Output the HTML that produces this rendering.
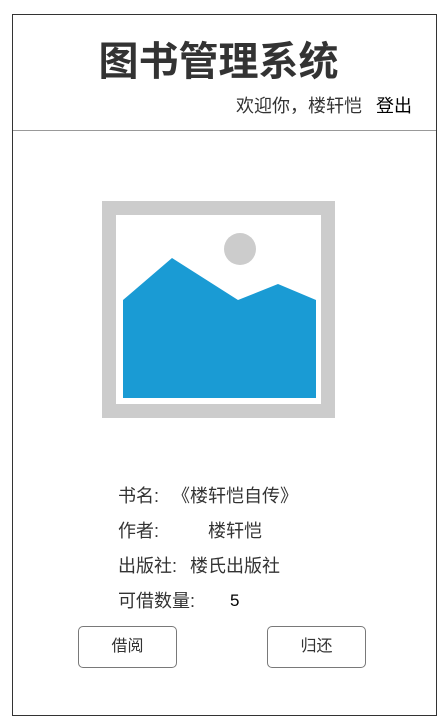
<!DOCTYPE html>
<html><head><meta charset="utf-8"><style>
body{margin:0;width:447px;height:725px;background:#fff;font-family:"Liberation Sans","Noto Sans CJK SC",sans-serif;position:relative;overflow:hidden}
.a{position:absolute}
.t{font-size:18px;color:#333;white-space:nowrap;line-height:22px}
.btn{position:absolute;width:97px;height:40px;border:1px solid #797979;border-radius:5px;text-align:center;line-height:40px;font-size:16px;color:#333;background:#fff}
</style></head><body>
<div class="a" style="left:12px;top:14px;width:423px;height:700px;border:1px solid #333"></div>
<div class="a" style="left:13px;top:130px;width:423px;height:1px;background:#999"></div>
<div class="a" style="left:0;width:437px;top:36px;text-align:center;font-size:40px;font-weight:bold;color:#333;line-height:52px">图书管理系统</div>
<div class="a t" style="left:236px;top:95px">欢迎你，楼轩恺</div>
<div class="a t" style="left:376px;top:95px;color:#000">登出</div>
<svg class="a" style="left:0;top:0" width="447" height="725">
<rect x="109" y="208" width="219" height="203" fill="none" stroke="#ccc" stroke-width="14"/>
<polygon points="123,300 172,258 238,300 278,284 316,300 316,398 123,398" fill="#1a9bd4"/>
<circle cx="240" cy="249" r="16" fill="#ccc"/>
</svg>
<div class="a t" style="left:118px;top:485px">书名:</div>
<div class="a t" style="left:172px;top:485px">《楼轩恺自传》</div>
<div class="a t" style="left:118px;top:520px">作者:</div>
<div class="a t" style="left:208px;top:520px">楼轩恺</div>
<div class="a t" style="left:118px;top:555px">出版社:</div>
<div class="a t" style="left:190px;top:555px">楼氏出版社</div>
<div class="a t" style="left:118px;top:590px">可借数量:</div>
<div class="a t" style="left:230px;top:590px;color:#000;font-size:17px">5</div>
<div class="btn" style="left:78px;top:626px">借阅</div>
<div class="btn" style="left:267px;top:626px">归还</div>
</body></html>
